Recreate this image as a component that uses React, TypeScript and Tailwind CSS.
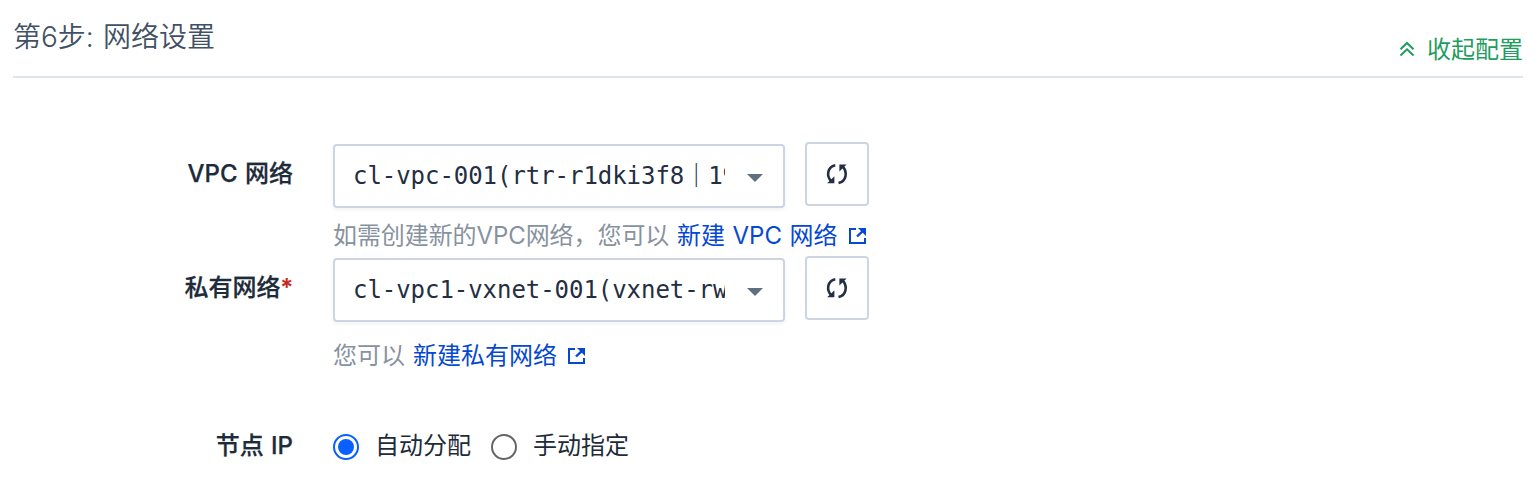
import type { ReactNode } from 'react';

function RefreshIcon() {
  return (
    <svg className="h-6 w-6" viewBox="0 0 24 24" fill="none">
      <path d="M10.300 3.200C2 4.800 1.200 14.500 6.500 19.500" stroke="#242e42" strokeWidth="2.6" />
      <path d="M2.200 21.200h7.200v-7z" fill="#242e42" />
      <path d="M13.500 21C21.800 19.400 22.600 9.500 17.500 4.500" stroke="#242e42" strokeWidth="2.6" />
      <path d="M21.600 2.400h-7.200v7z" fill="#242e42" />
    </svg>
  );
}

function ExternalIcon() {
  return (
    <svg className="h-4 w-[17px]" viewBox="0 0 17 16" fill="none" stroke="#0548d1" strokeWidth="2">
      <path d="M7 1H1v14h15v-5" />
      <path d="M8 8.500L14 2.800" strokeWidth="2.4" />
      <path d="M9 0H17v8z" fill="#0548d1" stroke="none" />
    </svg>
  );
}

function Label({ children }: { children: ReactNode }) {
  return (
    <div className="flex h-8 w-[293px] shrink-0 items-center justify-end text-[24px] leading-8 font-medium [word-spacing:1px] whitespace-pre text-[#1d2b3a] [-webkit-text-stroke:0.25px_currentColor]">
      {children}
    </div>
  );
}

function Select({ value }: { value: ReactNode }) {
  return (
    <button className="flex h-16 w-[452px] items-center rounded-[4px] border-2 border-[#ccd5e1] bg-white pl-[18px] text-left shadow-[0_2px_4px_rgba(36,46,66,0.06)]">
      <span className="w-[372px] overflow-hidden font-['DejaVu_Sans_Mono','Noto_Sans_CJK_SC',monospace] text-[24px] leading-8 tracking-[-0.05px] whitespace-nowrap text-[#242e42]">
        {value}
      </span>
      <svg className="mt-[3px] ml-[22px] h-2 w-4" viewBox="0 0 16 8">
        <path d="M0 0h16L8 8z" fill="#5f7080" />
      </svg>
    </button>
  );
}

function RefreshButton() {
  return (
    <button className="-mt-0.5 flex h-16 w-16 items-center justify-center self-start rounded-[4px] border-2 border-[#ccd5e1] bg-white">
      <RefreshIcon />
    </button>
  );
}

export default function App() {
  return (
    <main className="h-[486px] w-[1538px] overflow-hidden bg-white font-['Inter','Noto_Sans_CJK_SC',sans-serif]">
      <header className="ml-[13px] flex h-[78px] w-[1510px] justify-between border-b-2 border-[#dce5ec]">
        <h1 className="pt-[17px] text-[28px] leading-10 font-[350] [word-spacing:1.5px] whitespace-pre text-[#415165]">第6步: 网络设置</h1>
        <a className="flex items-center gap-[12px] pt-[22px] text-[24px] leading-8 text-[#1f9c60]">
          <svg className="h-4 w-4" viewBox="0 0 16 16" fill="none" stroke="currentColor" strokeWidth="2">
            <path d="M1.5 8.2L8 2l6.500 6.200M1.500 14.500L8 8.300l6.500 6.200" />
          </svg>
          <span className="pt-0.5">收起配置</span>
        </a>
      </header>

      <section className="flex pt-[66px]">
        <div className="pt-[14px]"><Label>VPC 网络</Label></div>
        <div className="ml-10">
          <div className="flex gap-5">
            <Select value="cl-vpc-001(rtr-r1dki3f8｜192.168.0.0/16)" />
            <RefreshButton />
          </div>
          <p className="flex h-[50px] items-center pt-1.5 text-[24px] whitespace-pre text-[#8792a0]">
            <span className="w-[344px] tracking-[-0.08px]">如需创建新的VPC网络，您可以</span>
            <a className="flex items-center gap-[11px] text-[#0548d1]"><span className="w-[161px] [word-spacing:0.8px]">新建 VPC 网络</span><ExternalIcon /></a>
          </p>
        </div>
      </section>

      <section className="flex">
        <div className="pt-[14px]"><Label>私有网络<span className="text-[#ca2621]">*</span></Label></div>
        <div className="ml-10">
          <div className="flex gap-5">
            <Select value="cl-vpc1-vxnet-001(vxnet-rwx8k2m1)" />
            <RefreshButton />
          </div>
          <p className="flex h-[68px] items-center text-[24px] whitespace-pre text-[#8792a0]">
            <span className="w-20">您可以</span>
            <a className="flex items-center gap-[11px] text-[#0548d1]"><span className="w-[144px]">新建私有网络</span><ExternalIcon /></a>
          </p>
        </div>
      </section>

      <section className="flex items-center pt-10">
        <Label>节点 IP</Label>
        <div className="ml-10 flex items-center text-[24px] leading-8 text-[#1d2b3a]">
          <span className="mt-0.5 flex h-[26px] w-[26px] items-center justify-center rounded-full border-2 border-[#0a60ff]">
            <span className="h-4 w-4 rounded-full bg-[#0a60ff]" />
          </span>
          <span className="ml-4 w-[96px]">自动分配</span>
          <span className="mt-0.5 ml-5 h-[26px] w-[26px] rounded-full border-2 border-[#666]" />
          <span className="ml-4">手动指定</span>
        </div>
      </section>
    </main>
  );
}
